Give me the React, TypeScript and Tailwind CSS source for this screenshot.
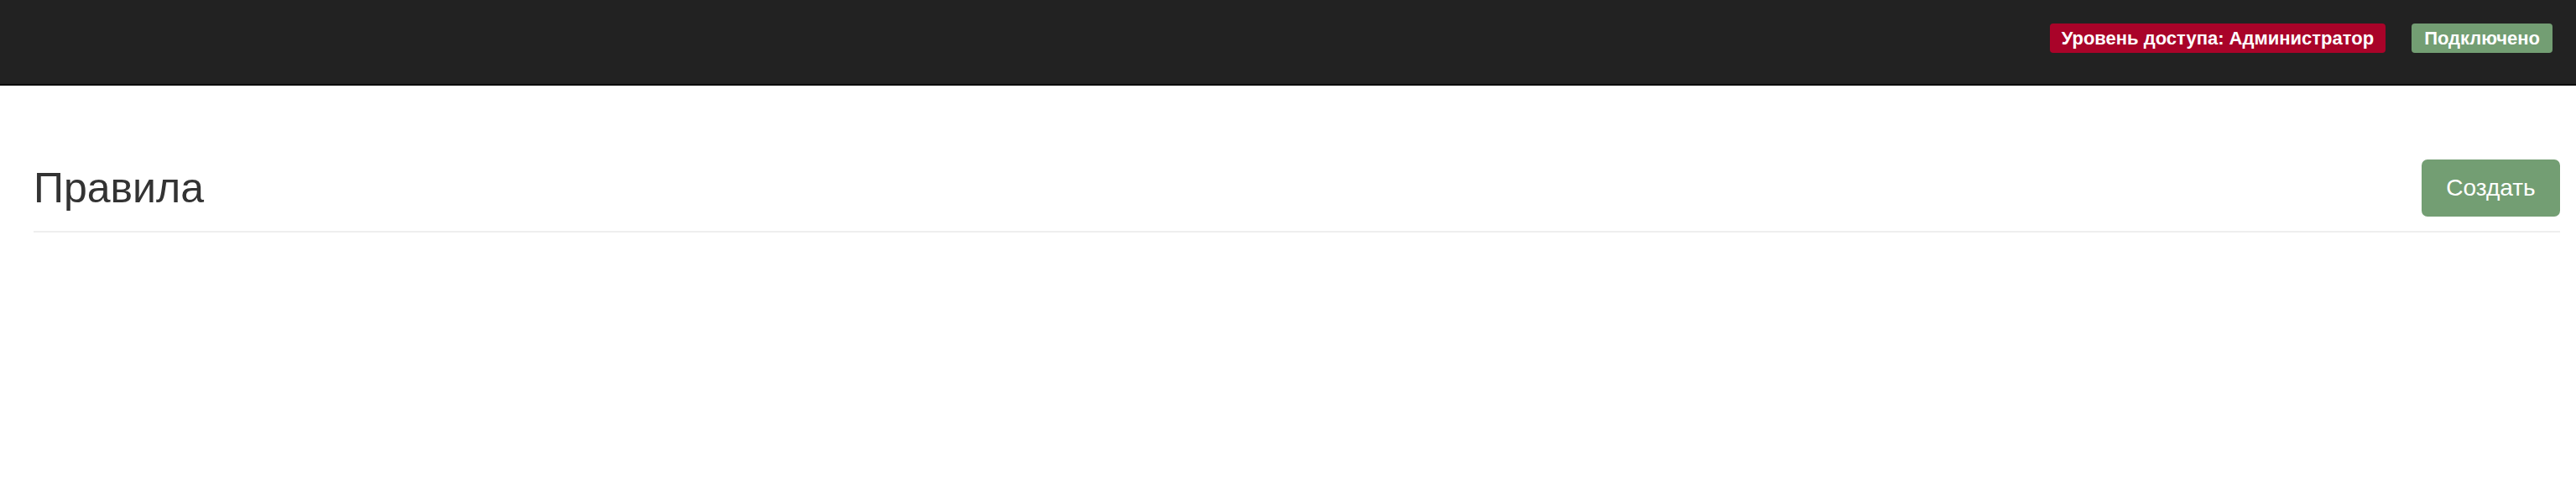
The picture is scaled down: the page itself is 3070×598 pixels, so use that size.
import React from "react";

export default function App() {
  return (
    <div className="min-h-[598px] bg-white" style={{ fontFamily: '"Liberation Sans", Arial, sans-serif' }}>
      <nav className="h-[102px] bg-[#222222] border-b-2 border-[#080808] flex items-start justify-end pt-[28px] pr-[28px] gap-[31px]">
        <span className="h-[35px] px-[14px] flex items-center rounded-[4px] bg-[#a90329] text-white font-bold text-[22px] leading-none">
          Уровень доступа: Администратор
        </span>
        <span className="h-[35px] px-[15px] flex items-center rounded-[4px] bg-[#739e73] text-white font-bold text-[22px] leading-none">
          Подключено
        </span>
      </nav>
      <main className="pl-[40px] pr-[19px] pt-[88px]">
        <div className="flex items-center justify-between pb-[17px] border-b-2 border-[#eeeeee]">
          <h1 className="text-[50px] leading-none font-normal text-[#333333]">Правила</h1>
          <button className="h-[68px] w-[165px] rounded-[7px] bg-[#739e73] text-white text-[28px] flex items-center justify-center">
            Создать
          </button>
        </div>
      </main>
    </div>
  );
}
